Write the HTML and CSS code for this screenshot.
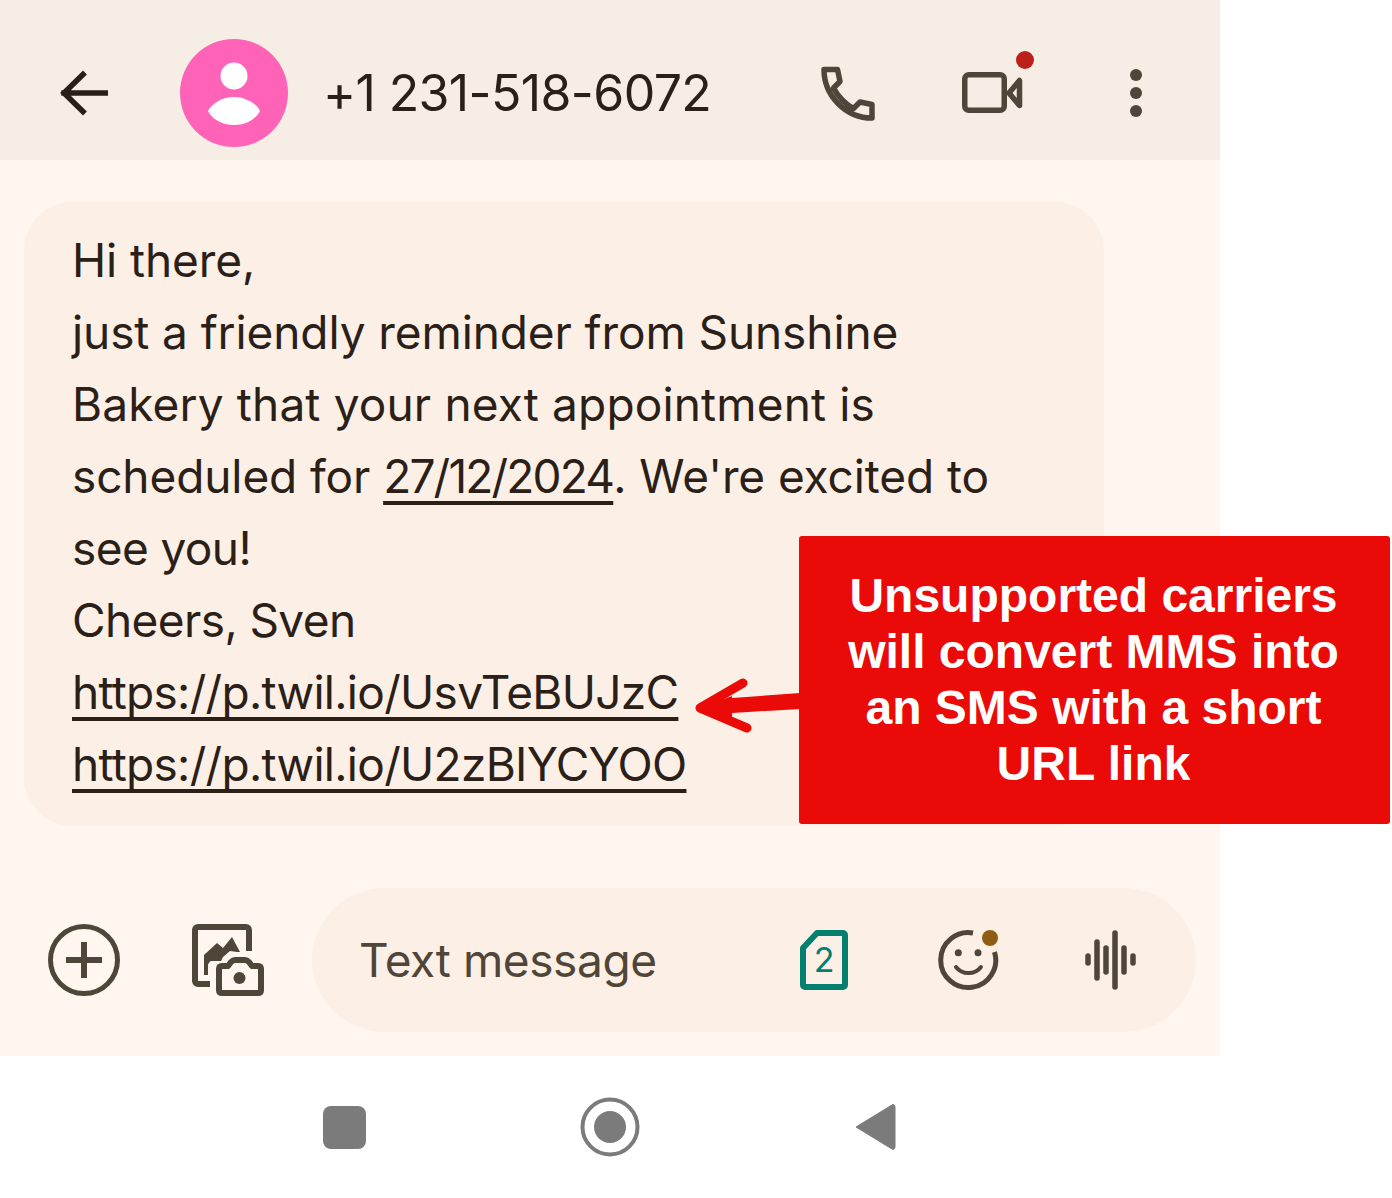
FILE: index.html
```html
<!DOCTYPE html>
<html lang="en">
<head>
<meta charset="utf-8">
<title>Messages</title>
<link rel="stylesheet" href="styles.css">
</head>
<body>
<div class="page">
  <div class="phone">
    <header class="topbar">
      <svg class="ic-back" width="48" height="48" viewBox="0 0 48 48"><path d="M46 24H4M23 5.500 4 24l19 18.500" fill="none" stroke="#291f16" stroke-width="5.500" stroke-linecap="square"/></svg>
      <svg class="avatar" width="108" height="108" viewBox="0 0 108 108"><circle cx="54" cy="54" r="54" fill="#ff63b8"/><circle cx="54" cy="37" r="13.500" fill="#fff"/><path d="M28 72C32 64 43 58 54 58s22 6 26 14c-4 8-14 14-26 14s-22-6-26-14z" fill="#fff"/></svg>
      <div class="number">+1 231-518-6072</div>
      <svg class="ic-phone" width="56" height="56" viewBox="0 0 56 56"><path d="M4 3.500h13.500l2.500 12-6.500 6.500c5 9 11 15.500 20 20.500l6.500-6.500 12 2.500V52C26 52 4 30 4 3.500z" fill="none" stroke="#4f4539" stroke-width="5.500" stroke-linejoin="round"/></svg>
      <svg class="ic-video" width="72" height="66" viewBox="0 0 72 66"><rect x="2.750" y="23.750" width="39.500" height="35.500" rx="4" fill="none" stroke="#4f4539" stroke-width="5.500"/><path d="M47 42 57.500 29.500v25z" fill="none" stroke="#4f4539" stroke-width="5.500" stroke-linejoin="round"/><circle cx="63" cy="9" r="9" fill="#bb201b"/></svg>
      <svg class="ic-more" width="12" height="48" viewBox="0 0 12 48"><circle cx="6" cy="6" r="6" fill="#4f4539"/><circle cx="6" cy="24" r="6" fill="#4f4539"/><circle cx="6" cy="42" r="6" fill="#4f4539"/></svg>
    </header>
    <main class="thread">
      <div class="bubble">
        <p class="line">Hi there,</p>
        <p class="line">just a friendly reminder from Sunshine</p>
        <p class="line line-wide">Bakery that your next appointment is</p>
        <p class="line">scheduled for <span class="link date">27/12/2024</span>. We're excited to</p>
        <p class="line line-tight">see you!</p>
        <p class="line line-tight">Cheers, Sven</p>
        <p class="line"><span class="link">https://p.twil.io/UsvTeBUJzC</span></p>
        <p class="line"><span class="link">https://p.twil.io/U2zBIYCYOO</span></p>
      </div>
    </main>
    <footer class="composer">
      <svg class="ic-plus" width="72" height="72" viewBox="0 0 72 72"><circle cx="36" cy="36" r="33.500" fill="none" stroke="#4f4539" stroke-width="5"/><path d="M36 18v36M18 36h36" stroke="#4f4539" stroke-width="6"/></svg>
      <svg class="ic-gallery" width="72" height="72" viewBox="0 0 72 72"><path d="M18 60H6a3 3 0 0 1-3-3V6a3 3 0 0 1 3-3h48a3 3 0 0 1 3 3v21" fill="none" stroke="#4f4539" stroke-width="6"/><path d="M12 51V31L25 19l6 5 9-11 8 15h-3l-7-1-7 6-2 4h-8c-2 0-3 0-4 2-1 1-1 2-1 3v9z" fill="#4f4539"/><path d="M30 42h6l3-4c1-1 2-2 4-2h10c2 0 3 1 4 2l3 4h6c2 0 3 1 3 3v21c0 2-1 3-3 3H30c-2 0-3-1-3-3V45c0-2 1-3 3-3z" fill="none" stroke="#4f4539" stroke-width="6" stroke-linejoin="round"/><circle cx="47.500" cy="54" r="6" fill="#4f4539"/></svg>
      <div class="input">
        <span class="placeholder">Text message</span>
        <div class="sim"><svg class="sim-shape" width="48" height="60" viewBox="0 0 48 60"><path d="M17 3h26a2 2 0 0 1 2 2v50a2 2 0 0 1-2 2H5a2 2 0 0 1-2-2V18z" fill="none" stroke="#037f6f" stroke-width="6" stroke-linejoin="round"/></svg><span class="sim-num">2</span></div>
        <svg class="ic-smile" width="64" height="64" viewBox="0 0 64 64"><path d="M37 5A27.500 27.500 0 1 0 58.500 24" fill="none" stroke="#4f4539" stroke-width="5"/><circle cx="22.300" cy="24.700" r="3.500" fill="#4f4539"/><circle cx="42" cy="24.700" r="3.500" fill="#4f4539"/><path d="M20 39c6 8 19 8 25 0" fill="none" stroke="#4f4539" stroke-width="4" stroke-linecap="round"/><circle cx="54" cy="10" r="8" fill="#8f5c14"/></svg>
        <svg class="ic-wave" width="52" height="60" viewBox="0 0 52 60"><path d="M3 26v7M12 12v36M21 18v24M30 3v54M39 18v24M48 26v7" stroke="#4f4539" stroke-width="5.500" stroke-linecap="round"/></svg>
      </div>
    </footer>
  </div>
  <nav class="navbar">
    <div class="nav-square"></div>
    <svg class="nav-home" width="60" height="60" viewBox="0 0 60 60"><circle cx="30" cy="30" r="27.500" fill="none" stroke="#7b7b7b" stroke-width="4"/><circle cx="30" cy="30" r="16" fill="#7b7b7b"/></svg>
    <svg class="nav-back" width="42" height="48" viewBox="0 0 42 48"><path d="M2 24 38 2c1-1 3 0 3 2v40c0 2-2 3-3 2z" fill="#7b7b7b" stroke="#7b7b7b" stroke-linejoin="round"/></svg>
  </nav>
  <aside class="callout">Unsupported carriers<br>will convert MMS into<br>an SMS with a short<br>URL link</aside>
  <svg class="arrow" width="110" height="60" viewBox="0 0 110 60"><path d="M107 16 39 21v15l68-4z" fill="#ea0a07"/><path d="M50 6 7 31l47 20" fill="none" stroke="#ea0a07" stroke-width="9" stroke-linecap="round" stroke-linejoin="round"/><path d="M7 31 39 19v21z" fill="#ea0a07"/></svg>
</div>
</body>
</html>
```

FILE: styles.css
```css
* { box-sizing: border-box; }
html, body { margin: 0; padding: 0; background: #fff; }
.page { position: relative; width: 1392px; height: 1198px; font-family: Inter, Roboto, "Noto Sans", sans-serif; overflow: hidden; }
.phone { width: 1220px; height: 1056px; background: #fff7ef; display: flex; flex-direction: column; }
.topbar { height: 160px; background: #f6ede4; display: flex; align-items: center; flex: none; padding-top: 26px; padding-left: 60px; }
.topbar > svg, .number { flex: none; }
.ic-back { margin-right: 72px; }
.number { margin-left: 35px; width: 497px; font-size: 50px; font-weight: 400; letter-spacing: -0.6px; color: #2a2018; line-height: 60px; white-space: nowrap; }
.ic-phone { margin-right: 86px; margin-top: 2px; }
.ic-video { margin-top: -18px; margin-right: 96px; }
.thread { flex: 1; padding: 42px 0 0 24px; }
.bubble { width: 1080px; height: 624px; background: #fcefe5; border-radius: 48px; padding: 22px 0 0 48px; }
.line { margin: 0; font-size: 46px; font-weight: 400; letter-spacing: -0.1px; line-height: 72px; color: #2a2018; white-space: nowrap; }
.line-wide { letter-spacing: 0.15px; }
.line-tight { letter-spacing: -0.6px; }
.link { letter-spacing: -0.7px; text-decoration: underline; text-decoration-thickness: 4px; text-underline-offset: 8px; text-decoration-skip-ink: none; }
.date { letter-spacing: -1.8px; }
.composer { flex: none; height: 168px; padding: 0 24px 24px 48px; display: flex; align-items: center; }
.ic-plus { margin-right: 72px; flex: none; }
.ic-gallery { margin-right: 48px; flex: none; }
.input { width: 884px; height: 144px; background: #fcefe5; border-radius: 72px; display: flex; align-items: center; padding-left: 47px; flex: none; }
.placeholder { width: 441px; font-size: 46px; font-weight: 400; letter-spacing: -0.4px; color: #4f4539; white-space: nowrap; flex: none; }
.sim { position: relative; width: 48px; height: 60px; margin-right: 88px; flex: none; display: flex; align-items: center; justify-content: center; }
.sim-shape { position: absolute; left: 0; top: 0; }
.sim-num { position: relative; font-size: 34px; line-height: 60px; color: #037f6f; }
.ic-smile { margin-right: 85px; flex: none; }
.ic-wave { flex: none; }
.navbar { height: 142px; display: flex; align-items: center; padding: 0 0 0 323px; }
.nav-square { width: 43px; height: 43px; border-radius: 8px; background: #7b7b7b; margin-right: 214px; }
.nav-home { margin-right: 214px; }
.callout { position: absolute; left: 799px; top: 536px; width: 591px; height: 288px; background: #ea0a07; border-radius: 3px; color: #fff; font-family: "Liberation Sans", Arial, sans-serif; font-weight: 700; font-size: 48px; line-height: 56px; text-align: center; padding: 32px 2px 0 0; }
.arrow { position: absolute; left: 693px; top: 677px; }
```
